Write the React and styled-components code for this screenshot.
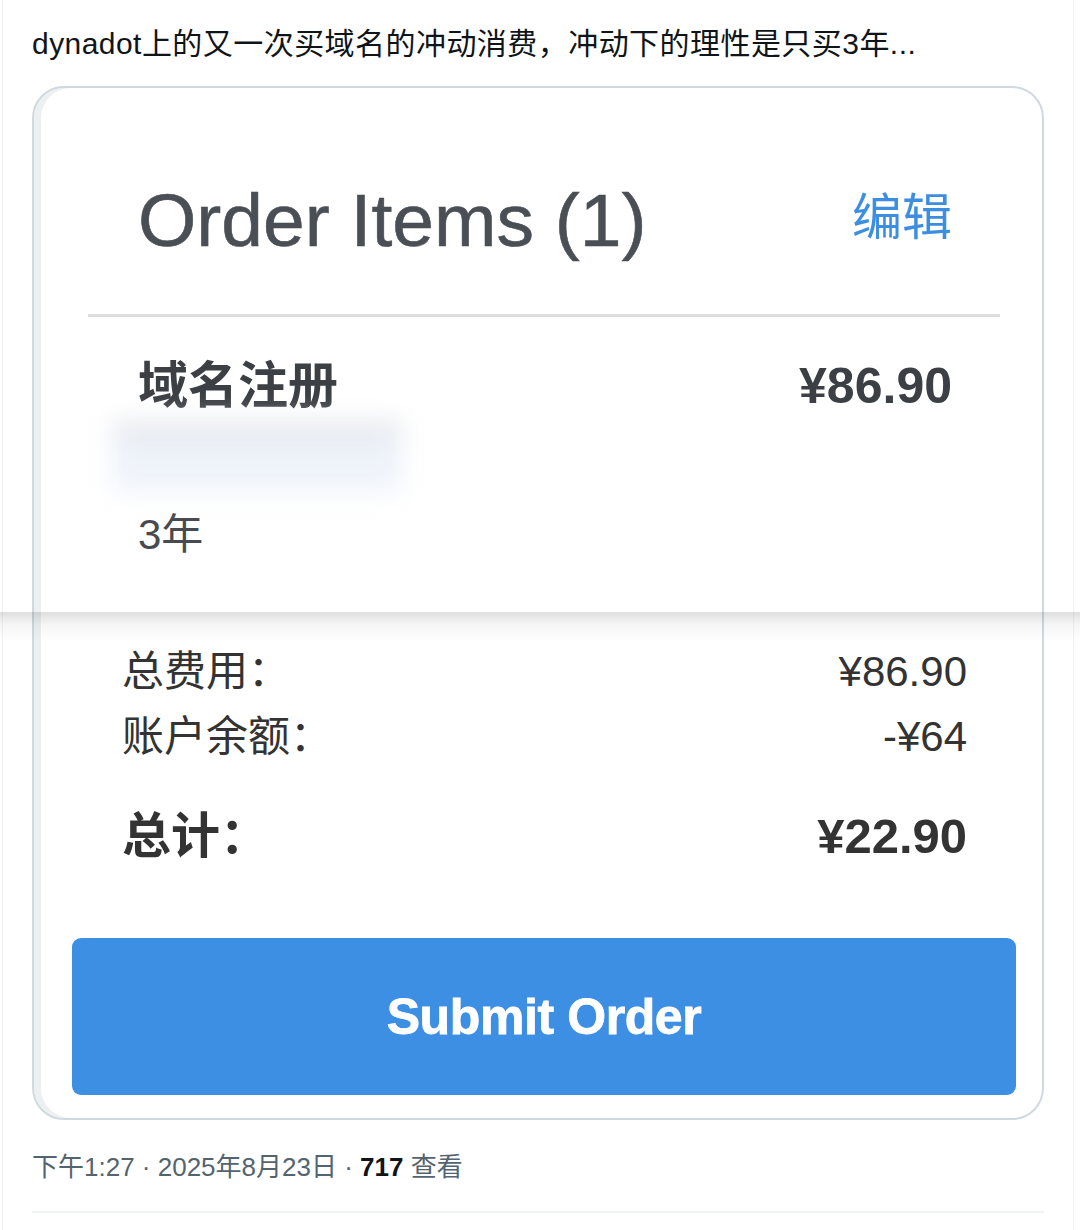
import styled, { createGlobalStyle } from "styled-components";

const GlobalStyle = createGlobalStyle`
  html, body {
    margin: 0;
    padding: 0;
    background: #ffffff;
  }
  body {
    font-family: "Liberation Sans", "Noto Sans CJK SC", sans-serif;
  }
`;

const App = () => {
  return (
    <>
      <GlobalStyle />
      <Column>
        <TweetText>dynadot上的又一次买域名的冲动消费，冲动下的理性是只买3年...</TweetText>
        <MediaCard>
          <OrderPanel>
            <TitleRow>
              <Title>Order Items (1)</Title>
              <EditLink>编辑</EditLink>
            </TitleRow>
            <Divider />
            <ItemRow>
              <ItemName>域名注册</ItemName>
              <ItemPrice>¥86.90</ItemPrice>
            </ItemRow>
            <Redacted />
            <Term>3年</Term>
          </OrderPanel>
          <Summary>
            <SumRow>
              <span>总费用：</span>
              <span>¥86.90</span>
            </SumRow>
            <SumRow>
              <span>账户余额：</span>
              <span>-¥64</span>
            </SumRow>
            <SumRow total>
              <span>总计：</span>
              <span>¥22.90</span>
            </SumRow>
            <SubmitButton>Submit Order</SubmitButton>
          </Summary>
        </MediaCard>
        <Meta>
          下午1:27 · 2025年8月23日 · <strong>717</strong> 查看
        </Meta>
      </Column>
    </>
  );
};

export default App;

const Column = styled.div`
  box-sizing: border-box;
  width: 1072px;
  min-height: 1230px;
  margin-left: 2px;
  padding: 24px 29px 0;
  border-left: 1px solid #eff3f4;
  border-right: 1px solid #eff3f4;
`;

const TweetText = styled.div`
  font-size: 30px;
  line-height: 40px;
  color: #0f1419;
  letter-spacing: 0.45px;
  margin-bottom: 22px;
  white-space: nowrap;
`;

const MediaCard = styled.div`
  box-sizing: border-box;
  width: 1012px;
  border: 2px solid #cfd9de;
  border-radius: 32px;
  background: #ffffff;
  box-shadow: inset 7px 0 0 #edf0f3;
`;

const OrderPanel = styled.div`
  position: relative;
  padding: 95px 90px 56px 104px;

  /* fold of the stitched screenshot, running across the whole page */
  &::after {
    content: "";
    position: absolute;
    top: 100%;
    left: -36px;
    right: -40px;
    height: 30px;
    background: linear-gradient(
      rgba(0, 0, 0, 0.13),
      rgba(0, 0, 0, 0.04) 40%,
      rgba(0, 0, 0, 0)
    );
    pointer-events: none;
  }
`;

const TitleRow = styled.div`
  display: flex;
  align-items: center;
  justify-content: space-between;
  height: 75px;
`;

const Title = styled.div`
  font-size: 75px;
  line-height: 75px;
  color: #4a4f55;
  -webkit-text-stroke: 0.6px #4a4f55;
`;

const EditLink = styled.div`
  font-size: 50px;
  line-height: 50px;
  color: #3b8ee0;
  margin-top: -6px;
`;

const Divider = styled.div`
  height: 3px;
  background: #dedede;
  margin: 56px 0 0 -50px;
  width: 912px;
`;

const ItemRow = styled.div`
  display: flex;
  justify-content: space-between;
  align-items: center;
  margin-top: 44px;
  height: 50px;
`;

const ItemName = styled.div`
  font-size: 50px;
  line-height: 50px;
  font-weight: bold;
  color: #3c4045;
`;

const ItemPrice = styled.div`
  font-size: 50px;
  line-height: 50px;
  font-weight: bold;
  color: #3c4045;
`;

const Redacted = styled.div`
  width: 290px;
  height: 72px;
  margin: 10px 0 0 -26px;
  background: linear-gradient(#e3e5e8, #ecf1f9 35%, #f2f5fb);
  filter: blur(12px);
`;

const Term = styled.div`
  margin-top: 21px;
  font-size: 42px;
  line-height: 42px;
  color: #474b50;
`;

const Summary = styled.div`
  padding: 27px 75px 23px 88px;
`;

const SumRow = styled.div`
  display: flex;
  justify-content: space-between;
  align-items: center;
  font-size: ${(p) => (p.total ? "49px" : "42px")};
  line-height: ${(p) => (p.total ? "60px" : "65px")};
  font-weight: ${(p) => (p.total ? "bold" : "normal")};
  margin-top: ${(p) => (p.total ? "37px" : "0")};
  color: #333333;
`;

const SubmitButton = styled.button`
  display: flex;
  align-items: center;
  justify-content: center;
  box-sizing: border-box;
  width: 944px;
  height: 157px;
  margin: 72px 0 0 -50px;
  border: none;
  border-radius: 9px;
  background: #3d8fe3;
  color: #ffffff;
  font-family: "Liberation Sans", sans-serif;
  font-size: 50px;
  font-weight: bold;
  letter-spacing: -0.4px;
  -webkit-text-stroke: 0.8px #ffffff;
  padding: 0;
`;

const Meta = styled.div`
  margin-top: 29px;
  padding-bottom: 26px;
  border-bottom: 2px solid #eff3f4;
  width: 1012px;
  font-size: 26px;
  line-height: 36px;
  color: #536471;

  strong {
    color: #0f1419;
    font-weight: bold;
  }
`;
